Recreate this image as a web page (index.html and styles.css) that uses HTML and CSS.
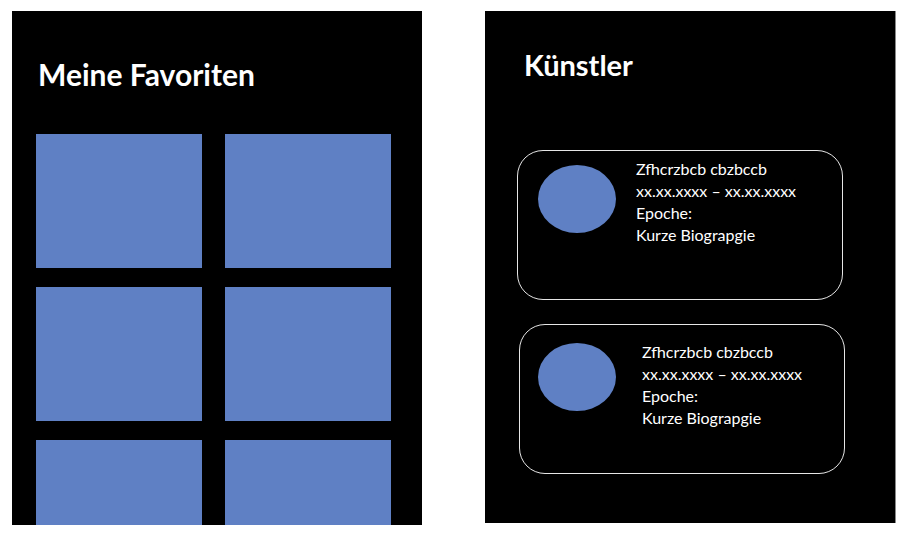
FILE: index.html
```html
<!DOCTYPE html>
<html lang="de">
<head>
  <meta charset="UTF-8">
  <meta name="viewport" content="width=device-width, initial-scale=1.0">
  <title>Meine Favoriten</title>
  <link rel="stylesheet" href="styles.css">
</head>
<body>
  <div class="screens">
    <div class="screen favorites">
      <h1 class="title">Meine Favoriten</h1>
      <div class="tiles">
        <div class="tile"></div>
        <div class="tile"></div>
        <div class="tile"></div>
        <div class="tile"></div>
        <div class="tile"></div>
        <div class="tile"></div>
      </div>
    </div>

    <div class="screen artists">
      <h1 class="title">Künstler</h1>
      <div class="card">
        <div class="avatar"></div>
        <div class="info">
          <p>Zfhcrzbcb cbzbccb</p>
          <p>xx.xx.xxxx – xx.xx.xxxx</p>
          <p>Epoche:</p>
          <p>Kurze Biograpgie</p>
        </div>
      </div>
      <div class="card second">
        <div class="avatar"></div>
        <div class="info">
          <p>Zfhcrzbcb cbzbccb</p>
          <p>xx.xx.xxxx – xx.xx.xxxx</p>
          <p>Epoche:</p>
          <p>Kurze Biograpgie</p>
        </div>
      </div>
    </div>
  </div>
</body>
</html>
```

FILE: styles.css
```css
body {
    margin: 0;
    background-color: #fff;
    font-family: Lato, "Open Sans", sans-serif;
    color: #fff;
  }
  .screens {
    display: flex;
    gap: 63px;
    padding: 11px 0 0 12px;
  }
  .screen {
    width: 410px;
    height: 514px;
    background-color: #000;
    overflow: hidden;
  }
  .title {
    margin: 0;
    font-size: 30px;
    font-weight: bold;
    line-height: 34px;
  }
  .favorites .title {
    padding: 46px 0 0 26px;
  }
  .tiles {
    display: grid;
    grid-template-columns: 166px 166px;
    column-gap: 23px;
    row-gap: 19px;
    padding: 43px 0 0 24px;
  }
  .tile {
    height: 134px;
    background-color: #5f80c4;
  }
  .artists {
    height: 512px;
    border-right: 1px solid #888;
  }
  .artists .title {
    padding: 37px 0 0 39px;
    font-size: 29px;
  }
  .card {
    display: flex;
    align-items: flex-start;
    gap: 20px;
    width: 326px;
    height: 150px;
    margin: 68px 0 0 32px;
    padding: 0 0 0 20px;
    border: 1px solid #e6e6e6;
    border-radius: 26px;
    box-sizing: border-box;
  }
  .card.second {
    margin: 24px 0 0 34px;
    padding-left: 18px;
    gap: 26px;
  }
  .avatar {
    flex: none;
    width: 78px;
    height: 68px;
    margin-top: 14px;
    border-radius: 50%;
    background-color: #5f80c4;
  }
  .card.second .avatar {
    margin-top: 18px;
  }
  .info {
    padding-top: 7px;
    font-size: 16px;
    line-height: 22px;
  }
  .card.second .info {
    padding-top: 16px;
  }
  .info p {
    margin: 0;
  }
```
